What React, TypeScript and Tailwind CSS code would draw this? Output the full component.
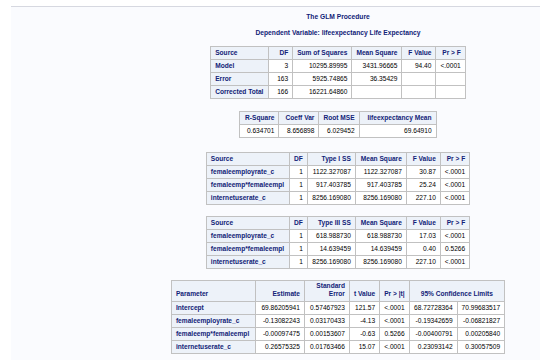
type Align = 'left' | 'right' | 'center'

type Col = { label: string; width: number; align?: Align }

type Row = string[]

const th = 'border border-[#c1c1c1] bg-[#edf2f9] px-[4px] py-0 font-bold text-[#112277] whitespace-nowrap'
const rowHead = 'border border-[#c1c1c1] bg-[#edf2f9] px-[4px] py-0 text-left font-bold text-[#112277] whitespace-nowrap'
const td = 'border border-[#c1c1c1] bg-white px-[4px] py-0 text-right text-black whitespace-nowrap'

function alignClass(align: Align | undefined) {
  if (align === 'left') return 'text-left'
  if (align === 'center') return 'text-center'
  return 'text-right'
}

function StatTable({ cols, rows, rowHeaders = true, className = '' }: { cols: Col[]; rows: Row[]; rowHeaders?: boolean; className?: string }) {
  return (
    <table className={`table-fixed border-collapse text-[6.6px] leading-[8px] ${className}`}>
      <colgroup>
        {cols.map((col) => (
          <col key={col.label} style={{ width: col.width }} />
        ))}
      </colgroup>
      <thead>
        <tr className="h-[13px]">
          {cols.map((col) => (
            <th key={col.label} className={`${th} ${alignClass(col.align)}`}>
              {col.label}
            </th>
          ))}
        </tr>
      </thead>
      <tbody>
        {rows.map((row) => (
          <tr key={row[0]} className="h-[13px]">
            {row.map((cell, i) =>
              i === 0 && rowHeaders ? (
                <th key={i} className={rowHead}>{cell}</th>
              ) : (
                <td key={i} className={td}>{cell}</td>
              ),
            )}
          </tr>
        ))}
      </tbody>
    </table>
  )
}

const anova: Row[] = [
  ['Model', '3', '10295.89995', '3431.96665', '94.40', '<.0001'],
  ['Error', '163', '5925.74865', '36.35429', '', ''],
  ['Corrected Total', '166', '16221.64860', '', '', ''],
]

const typeOne: Row[] = [
  ['femaleemployrate_c', '1', '1122.327087', '1122.327087', '30.87', '<.0001'],
  ['femaleemp*femaleempl', '1', '917.403785', '917.403785', '25.24', '<.0001'],
  ['internetuserate_c', '1', '8256.169080', '8256.169080', '227.10', '<.0001'],
]

const typeThree: Row[] = [
  ['femaleemployrate_c', '1', '618.988730', '618.988730', '17.03', '<.0001'],
  ['femaleemp*femaleempl', '1', '14.639459', '14.639459', '0.40', '0.5266'],
  ['internetuserate_c', '1', '8256.169080', '8256.169080', '227.10', '<.0001'],
]

const estimates: Row[] = [
  ['Intercept', '69.86205941', '0.57467923', '121.57', '<.0001', '68.72728364', '70.99683517'],
  ['femaleemployrate_c', '-0.13082243', '0.03170433', '-4.13', '<.0001', '-0.19342659', '-0.06821827'],
  ['femaleemp*femaleempl', '-0.00097475', '0.00153607', '-0.63', '0.5266', '-0.00400791', '0.00205840'],
  ['internetuserate_c', '0.26575325', '0.01763466', '15.07', '<.0001', '0.23093142', '0.30057509'],
]

const estWidths = [84, 49, 45, 30, 29, 48, 45]

export default function App() {
  return (
    <div className="h-[360px] w-[540px] overflow-hidden bg-white font-['Liberation_Sans',Arial,sans-serif]">
      <div className="ml-[11px] mt-[6px] flex h-[354px] w-[654px] flex-col items-center border-t border-[#d6d8e0] bg-[#fafbfe]">
        <div className="mt-[6px] text-[6.7px] font-bold leading-[8px] text-[#112277]">The GLM Procedure</div>
        <div className="mt-[8px] text-[6.7px] font-bold leading-[8px] text-[#112277]">
          Dependent Variable: lifeexpectancy Life Expectancy
        </div>

        <StatTable
          className="mt-[9px]"
          cols={[
            { label: 'Source', width: 58, align: 'left' },
            { label: 'DF', width: 24 },
            { label: 'Sum of Squares', width: 57 },
            { label: 'Mean Square', width: 50 },
            { label: 'F Value', width: 34 },
            { label: 'Pr > F', width: 29 },
          ]}
          rows={anova}
        />

        <StatTable
          className="mt-[12px]"
          rowHeaders={false}
          cols={[
            { label: 'R-Square', width: 39 },
            { label: 'Coeff Var', width: 40 },
            { label: 'Root MSE', width: 40 },
            { label: 'lifeexpectancy Mean', width: 77 },
          ]}
          rows={[['0.634701', '8.656898', '6.029452', '69.64910']]}
        />

        <StatTable
          className="mt-[14px]"
          cols={[
            { label: 'Source', width: 83, align: 'left' },
            { label: 'DF', width: 18, align: 'center' },
            { label: 'Type I SS', width: 48 },
            { label: 'Mean Square', width: 51 },
            { label: 'F Value', width: 34 },
            { label: 'Pr > F', width: 26 },
          ]}
          rows={typeOne}
        />

        <StatTable
          className="mt-[11px]"
          cols={[
            { label: 'Source', width: 83, align: 'left' },
            { label: 'DF', width: 18, align: 'center' },
            { label: 'Type III SS', width: 48 },
            { label: 'Mean Square', width: 51 },
            { label: 'F Value', width: 34 },
            { label: 'Pr > F', width: 26 },
          ]}
          rows={typeThree}
        />

        <table className="mt-[11px] table-fixed border-collapse text-[6.6px] leading-[8px]">
          <colgroup>
            {estWidths.map((w, i) => (
              <col key={i} style={{ width: w }} />
            ))}
          </colgroup>
          <thead>
            <tr className="h-[21px]">
              <th className={`${th} pb-[3px] text-left align-bottom`}>Parameter</th>
              <th className={`${th} pb-[3px] text-right align-bottom`}>Estimate</th>
              <th className={`${th} pb-[3px] text-right align-bottom`}>
                Standard
                <br />
                Error
              </th>
              <th className={`${th} pb-[3px] text-right align-bottom`}>t Value</th>
              <th className={`${th} pb-[3px] text-center align-bottom`}>Pr &gt; |t|</th>
              <th colSpan={2} className={`${th} pb-[3px] text-center align-bottom`}>
                95% Confidence Limits
              </th>
            </tr>
          </thead>
          <tbody>
            {estimates.map((row) => (
              <tr key={row[0]} className="h-[13px]">
                {row.map((cell, i) =>
                  i === 0 ? (
                    <th key={i} className={rowHead}>{cell}</th>
                  ) : (
                    <td key={i} className={td}>{cell}</td>
                  ),
                )}
              </tr>
            ))}
          </tbody>
        </table>
      </div>
    </div>
  )
}
